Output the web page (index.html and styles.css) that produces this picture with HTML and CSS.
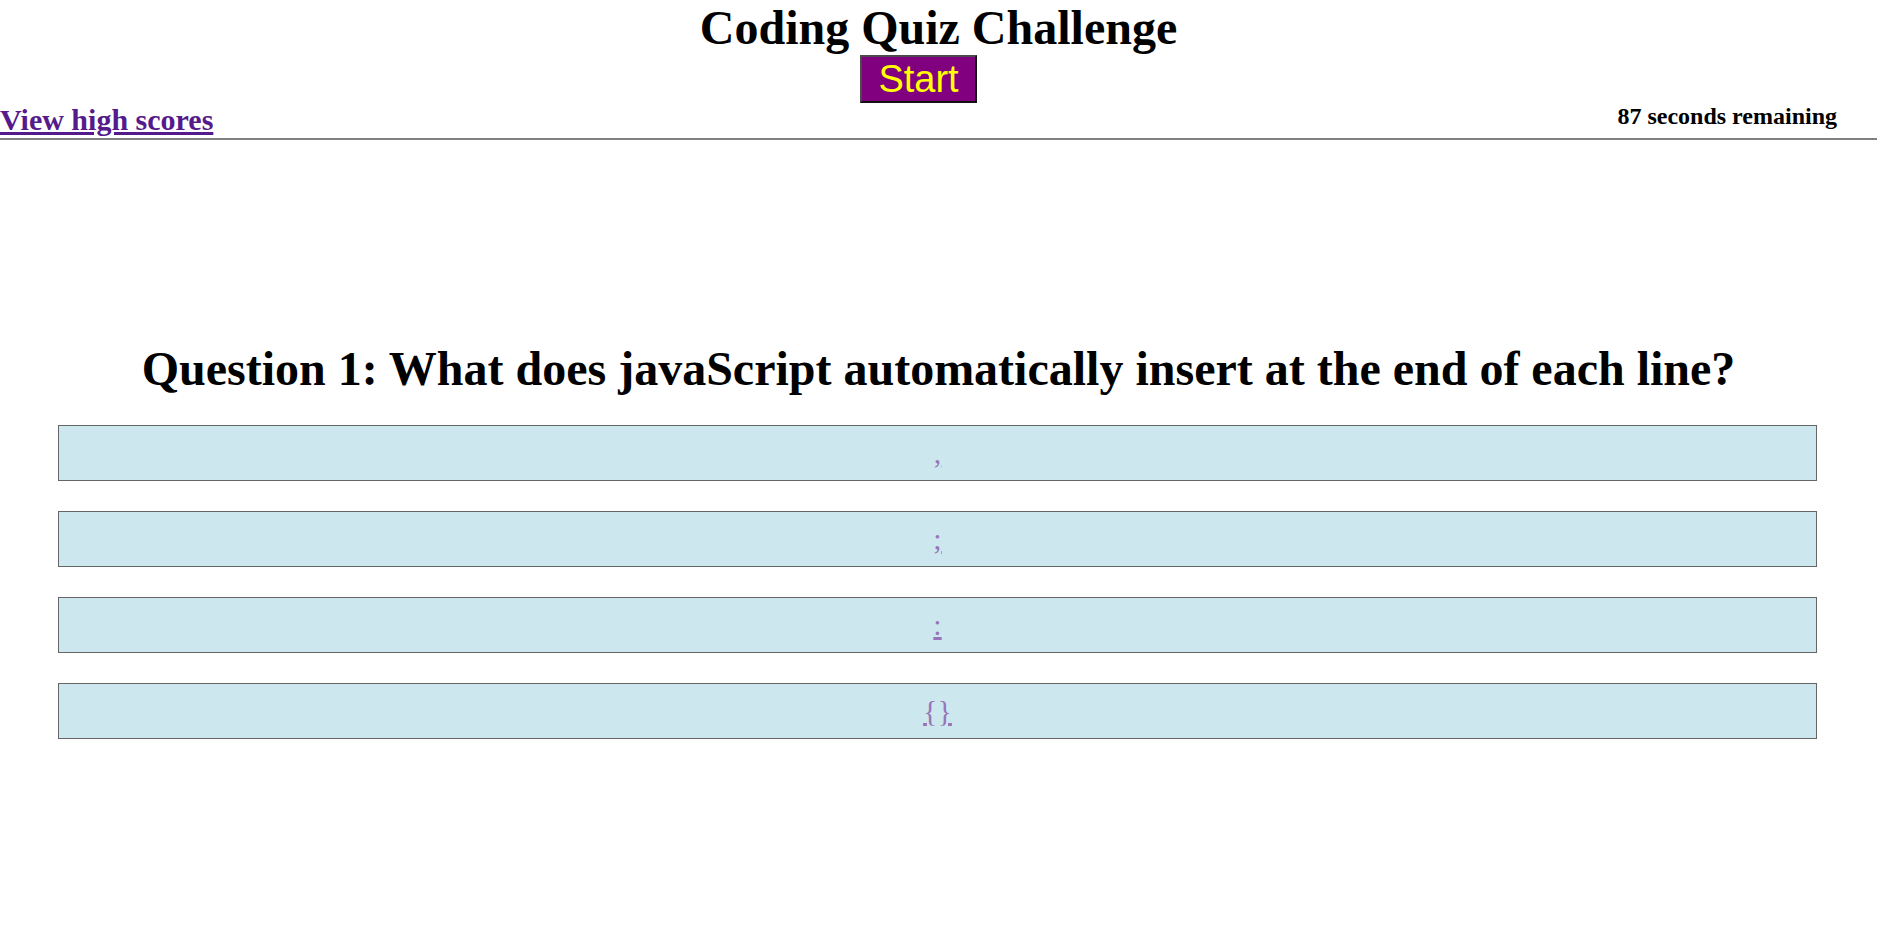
FILE: index.html
```html
<!DOCTYPE html>
<html lang="en">
<head>
<meta charset="utf-8">
<title>Coding Quiz Challenge</title>
<link rel="stylesheet" href="styles.css">
</head>
<body>
<header class="header">
  <h1 class="title">Coding Quiz Challenge</h1>
  <div class="start-wrap"><button class="start-btn" type="button">Start</button></div>
  <div class="bar">
    <a class="scores-link" href="#">View high scores</a>
    <span class="timer">87 seconds remaining</span>
  </div>
</header>
<main class="quiz">
  <h2 class="question">Question 1: What does javaScript automatically insert at the end of each line?</h2>
  <div class="answers">
    <div class="answer"><a class="answer-link" href="#">,</a></div>
    <div class="answer"><a class="answer-link" href="#">;</a></div>
    <div class="answer"><a class="answer-link" href="#">:</a></div>
    <div class="answer"><a class="answer-link" href="#">{}</a></div>
  </div>
</main>
</body>
</html>
```
FILE: styles.css
```css
html, body {
  margin: 0;
  padding: 0;
  background: #ffffff;
}

body {
  font-family: "Liberation Serif", "Times New Roman", serif;
  color: #000000;
}

.header {
  text-align: center;
  border-bottom: 2px solid #808080;
  padding-bottom: 1px;
}

.title {
  margin: 0;
  font-size: 48px;
  font-weight: bold;
  line-height: normal;
}

.start-wrap {
  display: flex;
  justify-content: center;
}

.start-btn {
  margin: 0 40px 0 0;
  padding: 0 16px;
  font-family: "Liberation Sans", Arial, sans-serif;
  font-size: 38px;
  line-height: 44px;
  color: #ffff00;
  background: #800080;
  border: 2px solid;
  border-color: #4a4a4a #111111 #111111 #4a4a4a;
  cursor: pointer;
}

.bar {
  display: flex;
  justify-content: space-between;
  align-items: flex-end;
  text-align: left;
}

.scores-link {
  font-size: 30px;
  font-weight: bold;
  color: #551a8b;
  line-height: normal;
}

.timer {
  font-size: 24px;
  font-weight: bold;
  line-height: normal;
  margin-right: 40px;
  margin-bottom: 7px;
}

.question {
  margin: 201px 0 0;
  font-size: 48px;
  font-weight: bold;
  line-height: normal;
  text-align: center;
}

.answers {
  display: flex;
  flex-direction: column;
  gap: 30px;
  margin-top: 29px;
  padding: 0 60px 0 58px;
}

.answer {
  background: lightblue;
  border: 1px solid #000000;
  opacity: 0.6;
  text-align: center;
  padding: 10px 0;
  font-size: 30px;
  line-height: 34px;
}

.answer-link {
  color: #551a8b;
}
```
